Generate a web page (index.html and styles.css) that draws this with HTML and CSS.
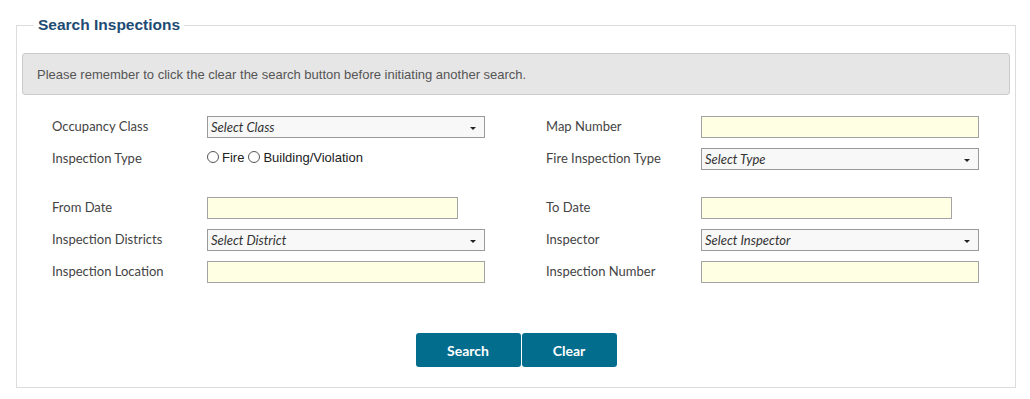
FILE: index.html
```html
<!DOCTYPE html>
<html lang="en">
<head>
    <meta charset="UTF-8">
    <title>Search Inspections</title>
    <link rel="stylesheet" href="styles.css">
</head>
<body>
    <div class="page">
        <fieldset class="search-box">
            <legend>Search Inspections</legend>

            <div class="notice">Please remember to click the clear the search button before initiating another search.</div>

            <div class="form-grid">
                <label class="lbl">Occupancy Class</label>
                <div class="select"><span>Select Class</span><i class="caret"></i></div>
                <span></span>
                <label class="lbl">Map Number</label>
                <div class="text-input"></div>

                <label class="lbl">Inspection Type</label>
                <div class="radios">
                    <span class="radio"></span><span class="radio-text">Fire</span>
                    <span class="radio"></span><span class="radio-text">Building/Violation</span>
                </div>
                <span></span>
                <label class="lbl">Fire Inspection Type</label>
                <div class="select"><span>Select Type</span><i class="caret"></i></div>

                <div class="spacer"></div>

                <label class="lbl">From Date</label>
                <div class="text-input short"></div>
                <span></span>
                <label class="lbl">To Date</label>
                <div class="text-input short"></div>

                <label class="lbl">Inspection Districts</label>
                <div class="select"><span>Select District</span><i class="caret"></i></div>
                <span></span>
                <label class="lbl">Inspector</label>
                <div class="select"><span>Select Inspector</span><i class="caret"></i></div>

                <label class="lbl">Inspection Location</label>
                <div class="text-input"></div>
                <span></span>
                <label class="lbl">Inspection Number</label>
                <div class="text-input"></div>
            </div>

            <div class="actions">
                <button class="btn">Search</button>
                <button class="btn">Clear</button>
            </div>
        </fieldset>
    </div>
</body>
</html>
```

FILE: styles.css
```css
body {
    margin: 0;
    background: #fff;
    font-family: Lato, "Liberation Sans", sans-serif;
}

.page {
    padding: 15px 14px 0 16px;
}

.search-box {
    width: 988px;
    margin: 0;
    padding: 0 5px 20px;
    border: 1px solid #dcdcdc;
}

.search-box legend {
    margin-left: 12px;
    padding: 0 4px;
    font-family: "Liberation Sans", Arial, sans-serif;
    font-size: 15.5px;
    font-weight: bold;
    line-height: 20px;
    color: #1d4b73;
}

.notice {
    margin-top: 18px;
    height: 40px;
    line-height: 41px;
    padding: 0 14px;
    background: #e6e6e6;
    border: 1px solid #cbcbcb;
    border-radius: 3px;
    font-family: "Liberation Sans", Arial, sans-serif;
    font-size: 13px;
    color: #555;
}

.form-grid {
    display: grid;
    grid-template-columns: 155px 278px 61px 155px 278px;
    grid-template-rows: 22px 22px 7px 22px 22px 22px;
    row-gap: 10px;
    margin: 21px 0 0 30px;
}

.spacer {
    grid-column: 1 / -1;
}

.lbl {
    font-size: 13px;
    line-height: 20px;
    color: #444;
}

.select {
    display: flex;
    align-items: center;
    justify-content: space-between;
    box-sizing: border-box;
    height: 22px;
    padding: 0 8px 0 3px;
    background: #f8f8f8;
    border: 1px solid #9a9a9a;
    font-size: 13px;
    font-style: italic;
    color: #333;
}

.caret {
    width: 0;
    height: 0;
    border-left: 3px solid transparent;
    border-right: 3px solid transparent;
    border-top: 3px solid #222;
    margin-top: 2px;
}

.text-input {
    box-sizing: border-box;
    height: 22px;
    background: #ffffe3;
    border: 1px solid #a3a3a3;
}

.text-input.short {
    width: 251px;
}

.radios {
    display: flex;
    align-items: center;
    height: 18px;
    font-family: "Liberation Sans", Arial, sans-serif;
    font-size: 13px;
    color: #222;
}

.radio {
    box-sizing: border-box;
    width: 12px;
    height: 12px;
    margin-right: 3px;
    border: 1px solid #555;
    border-radius: 50%;
}

.radio-text {
    margin-right: 4px;
}

.actions {
    display: flex;
    justify-content: center;
    margin-top: 50px;
}

.btn {
    width: 105px;
    height: 34px;
    margin: 0;
    background: #036d8e;
    color: #fff;
    border: none;
    border-radius: 3px;
    font-family: Lato, "Liberation Sans", sans-serif;
    font-size: 14px;
    font-weight: bold;
}

.btn + .btn {
    width: 95px;
    margin-left: 1px;
}
```
